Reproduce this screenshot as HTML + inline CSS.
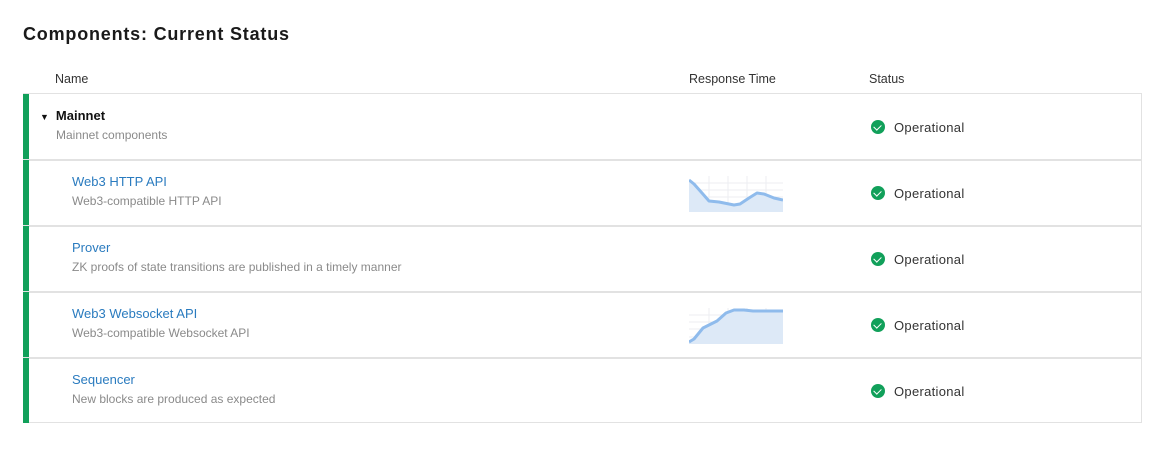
<!DOCTYPE html>
<html><head><meta charset="utf-8"><style>
body{margin:0;width:1161px;height:454px;background:#fff;font-family:"Liberation Sans",sans-serif;position:relative;overflow:hidden}
.a{position:absolute;white-space:nowrap}
.t{left:23px;top:24px;font-size:18px;font-weight:bold;color:#1a1a1a;letter-spacing:0.8px}
.h{top:72px;font-size:12.5px;color:#333}
.tbl{position:absolute;left:23px;top:93px;width:1118px;height:328px;border:1px solid #e2e2e2;border-left:none}
.row{position:absolute;left:0;width:1118px;height:65px;border-bottom:2px solid #e2e2e2}
.row:last-child{border-bottom:none}
.bar{position:absolute;left:0;top:0;bottom:0;width:6px;background:#11a05a}
.n{position:absolute;top:14px;font-size:13px;color:#2a7bbf}
.d{position:absolute;top:34px;font-size:12px;color:#8a8a8a}
.st{position:absolute;left:848px;top:26px;font-size:13px;color:#333;letter-spacing:0.3px}
.st i{display:inline-block;width:14px;height:14px;border-radius:50%;background:#11a05a;vertical-align:-2px;margin-right:9px;position:relative}
.st i:after{content:"";position:absolute;left:4px;top:3px;width:4px;height:6px;border:solid #fff;border-width:0 1.6px 1.6px 0;transform:rotate(45deg)}
svg{position:absolute;left:666px;top:16px}
</style></head><body>
<div class="a t">Components: Current Status</div>
<div class="a h" style="left:55px">Name</div>
<div class="a h" style="left:689px">Response Time</div>
<div class="a h" style="left:869px">Status</div>
<div class="tbl">
 <div class="row" style="top:0"><div class="bar"></div>
  <div class="n" style="left:17px;color:#111;font-weight:bold"><span style="font-size:9px;margin-right:7px">▼</span>Mainnet</div>
  <div class="d" style="left:33px">Mainnet components</div>
  <div class="st"><i></i>Operational</div></div>
 <div class="row" style="top:66px"><div class="bar"></div>
  <div class="n" style="left:49px">Web3 HTTP API</div>
  <div class="d" style="left:49px">Web3-compatible HTTP API</div>
  <svg width="94" height="36"><g stroke="#eceef2" stroke-width="1"><path d="M0 7H94M0 14H94M0 21H94M0 29H94M20 0V36M39 0V36M58 0V36M77 0V36"/></g><path d="M0 4 L5 8 L13 17 L20 25 L30 26 L45 29 L51 28 L60 22 L68 17 L75 18 L85 22 L94 24 V36 H0Z" fill="#dde9f7"/><polyline points="0,4 5,8 13,17 20,25 30,26 45,29 51,28 60,22 68,17 75,18 85,22 94,24" fill="none" stroke="#8fbbec" stroke-width="3" stroke-linejoin="round"/></svg>
  <div class="st"><i></i>Operational</div></div>
 <div class="row" style="top:132px"><div class="bar"></div>
  <div class="n" style="left:49px">Prover</div>
  <div class="d" style="left:49px">ZK proofs of state transitions are published in a timely manner</div>
  <div class="st"><i></i>Operational</div></div>
 <div class="row" style="top:198px"><div class="bar"></div>
  <div class="n" style="left:49px">Web3 Websocket API</div>
  <div class="d" style="left:49px">Web3-compatible Websocket API</div>
  <svg width="94" height="36"><g stroke="#eceef2" stroke-width="1"><path d="M0 7H94M0 14H94M0 21H94M0 29H94M20 0V36M39 0V36M58 0V36M77 0V36"/></g><path d="M0 34 L5 31 L14 20 L20 17 L28 13 L37 5 L45 2 L55 2 L64 3 L94 3 V36 H0Z" fill="#dde9f7"/><polyline points="0,34 5,31 14,20 20,17 28,13 37,5 45,2 55,2 64,3 94,3" fill="none" stroke="#8fbbec" stroke-width="3" stroke-linejoin="round"/></svg>
  <div class="st"><i></i>Operational</div></div>
 <div class="row" style="top:264px"><div class="bar"></div>
  <div class="n" style="left:49px">Sequencer</div>
  <div class="d" style="left:49px">New blocks are produced as expected</div>
  <div class="st"><i></i>Operational</div></div>
</div>
</body></html>
